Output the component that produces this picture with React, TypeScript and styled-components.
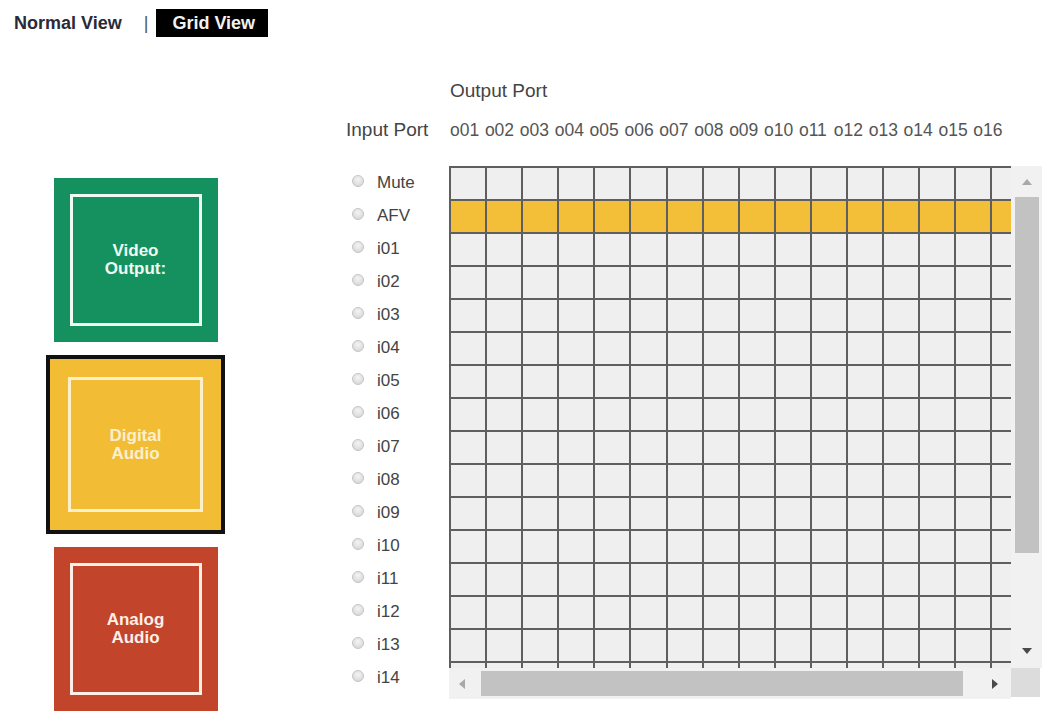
import styled, { createGlobalStyle } from "styled-components";

const GlobalStyle = createGlobalStyle`
  html, body {
    margin: 0;
    padding: 0;
    background: #ffffff;
    font-family: "Liberation Sans", Arial, sans-serif;
  }
`;

interface ITile {
  $bg: string;
  $ink: string;
  $selected?: boolean;
}

interface ICell {
  $hl?: boolean;
}

interface IArrow {
  $dir: "up" | "down" | "left" | "right";
  $dark?: boolean;
}

const Page = styled.div`
  width: 1054px;
  height: 714px;
  overflow: hidden;
`;

const ViewBar = styled.div`
  display: flex;
  align-items: center;
  height: 28px;
  padding: 9px 0 0 14px;
  font-size: 18px;
  font-weight: bold;
  color: #2a2a38;
`;

const Divider = styled.span`
  margin: 0 8px 0 22px;
  font-weight: normal;
  color: #555;
`;

const ViewTab = styled.span`
  display: flex;
  align-items: center;
  height: 28px;
  padding: 0 13px 0 16px;
  background: #000;
  color: #f2f2f2;
`;

const Body = styled.div`
  display: flex;
`;

const TileColumn = styled.div`
  width: 179px;
  margin: 0 121px 0 46px;
  padding-top: 141px;
  display: flex;
  flex-direction: column;
  align-items: center;
  gap: 13px;
`;

const Tile = styled.div<ITile>`
  box-sizing: border-box;
  width: ${(p) => (p.$selected ? "179px" : "164px")};
  height: ${(p) => (p.$selected ? "179px" : "164px")};
  padding: ${(p) => (p.$selected ? "18px" : "16px")};
  background: ${(p) => p.$bg};
  border: ${(p) => (p.$selected ? "4px solid #111" : "none")};
  color: ${(p) => p.$ink};
  display: flex;
`;

const TileInner = styled.div`
  flex: 1;
  border: 3px solid currentColor;
  display: flex;
  align-items: center;
  justify-content: center;
  text-align: center;
  font-size: 17px;
  font-weight: bold;
  line-height: 18px;
`;

const Matrix = styled.div`
  padding-top: 43px;
  color: #444;
`;

const OutputTitle = styled.div`
  height: 22px;
  line-height: 22px;
  margin: 0 0 17px 104px;
  font-size: 19px;
`;

const HeaderRow = styled.div`
  display: flex;
  height: 22px;
  line-height: 22px;
  margin-bottom: 25px;
`;

const InputTitle = styled.div`
  width: 104px;
  font-size: 19px;
`;

const PortLabel = styled.span`
  width: 34.9px;
  flex: none;
  font-size: 17.5px;
  color: #555;
`;

const MatrixBody = styled.div`
  display: flex;
`;

const InputList = styled.div`
  width: 103px;
  display: flex;
  flex-direction: column;
`;

const InputRow = styled.label`
  height: 33px;
  display: flex;
  align-items: center;
  padding-left: 6px;
  gap: 13px;
  font-size: 17px;
  color: #444;
`;

const Radio = styled.span`
  width: 10px;
  height: 10px;
  margin-top: -4px;
  border-radius: 50%;
  border: 1px solid #c4c4c4;
  background: radial-gradient(circle at 50% 35%, #f4f4f4, #d2d2d2);
`;

const ScrollFrame = styled.div`
  display: grid;
  grid-template-columns: 562px 31px;
  grid-template-rows: 502px 31px;
`;

const Viewport = styled.div`
  overflow: hidden;
  background: #f1f1f1;
`;

const CellGrid = styled.div`
  display: grid;
  grid-template-columns: repeat(16, 36.1px);
  grid-auto-rows: 33px;
  width: 580px;
`;

const Cell = styled.div<ICell>`
  box-sizing: border-box;
  border-left: 2px solid #5f5f5f;
  border-top: 2px solid #5f5f5f;
  background: ${(p) => (p.$hl ? "#f3be38" : "#efefef")};
`;

const VScroll = styled.div`
  background: #f1f1f1;
  display: flex;
  flex-direction: column;
  align-items: center;
  padding: 13px 0 14px;
`;

const HScroll = styled.div`
  background: #f1f1f1;
  display: flex;
  align-items: center;
  padding: 0 13px 0 10px;
`;

const Corner = styled.div`
  background: #dcdcdc;
  margin: 0 2px 2px 0;
`;

const VThumb = styled.div`
  width: 24px;
  height: 356px;
  margin: 12px 0 auto;
  background: #c2c2c2;
`;

const HThumb = styled.div`
  width: 482px;
  height: 25px;
  margin: 0 auto 0 16px;
  background: #c2c2c2;
`;

const Arrow = styled.span<IArrow>`
  width: 0;
  height: 0;
  flex: none;
  border: 5px solid transparent;
  ${(p) => {
    const c = p.$dark ? "#4a4a4a" : "#a8a8a8";
    switch (p.$dir) {
      case "up":
        return `border-bottom: 6px solid ${c}; border-top-width: 0;`;
      case "down":
        return `border-top: 6px solid ${c}; border-bottom-width: 0;`;
      case "left":
        return `border-right: 6px solid ${c}; border-left-width: 0;`;
      default:
        return `border-left: 6px solid ${c}; border-right-width: 0;`;
    }
  }}
`;

const outputs = Array.from({ length: 16 }, (_, i) => `o${String(i + 1).padStart(2, "0")}`);
const inputs = ["Mute", "AFV", ...Array.from({ length: 14 }, (_, i) => `i${String(i + 1).padStart(2, "0")}`)];
const gridRows = ["Mute", "AFV", ...Array.from({ length: 16 }, (_, i) => `i${i + 1}`)];

export default function App() {
  return (
    <Page>
      <GlobalStyle />
      <ViewBar>
        <span>Normal View</span>
        <Divider>|</Divider>
        <ViewTab>Grid View</ViewTab>
      </ViewBar>
      <Body>
        <TileColumn>
          <Tile $bg="#15915f" $ink="#eefaf3">
            <TileInner>Video<br />Output:</TileInner>
          </Tile>
          <Tile $bg="#f2bc35" $ink="#fcf0cc" $selected>
            <TileInner>Digital<br />Audio</TileInner>
          </Tile>
          <Tile $bg="#c2442b" $ink="#fdeee6">
            <TileInner>Analog<br />Audio</TileInner>
          </Tile>
        </TileColumn>
        <Matrix>
          <OutputTitle>Output Port</OutputTitle>
          <HeaderRow>
            <InputTitle>Input Port</InputTitle>
            {outputs.map((o) => (
              <PortLabel key={o}>{o}</PortLabel>
            ))}
          </HeaderRow>
          <MatrixBody>
            <InputList>
              {inputs.map((name) => (
                <InputRow key={name}>
                  <Radio />
                  {name}
                </InputRow>
              ))}
            </InputList>
            <ScrollFrame>
              <Viewport>
                <CellGrid>
                  {gridRows.map((r) =>
                    outputs.map((o) => <Cell key={r + o} $hl={r === "AFV"} />)
                  )}
                </CellGrid>
              </Viewport>
              <VScroll>
                <Arrow $dir="up" />
                <VThumb />
                <Arrow $dir="down" $dark />
              </VScroll>
              <HScroll>
                <Arrow $dir="left" />
                <HThumb />
                <Arrow $dir="right" $dark />
              </HScroll>
              <Corner />
            </ScrollFrame>
          </MatrixBody>
        </Matrix>
      </Body>
    </Page>
  );
}
